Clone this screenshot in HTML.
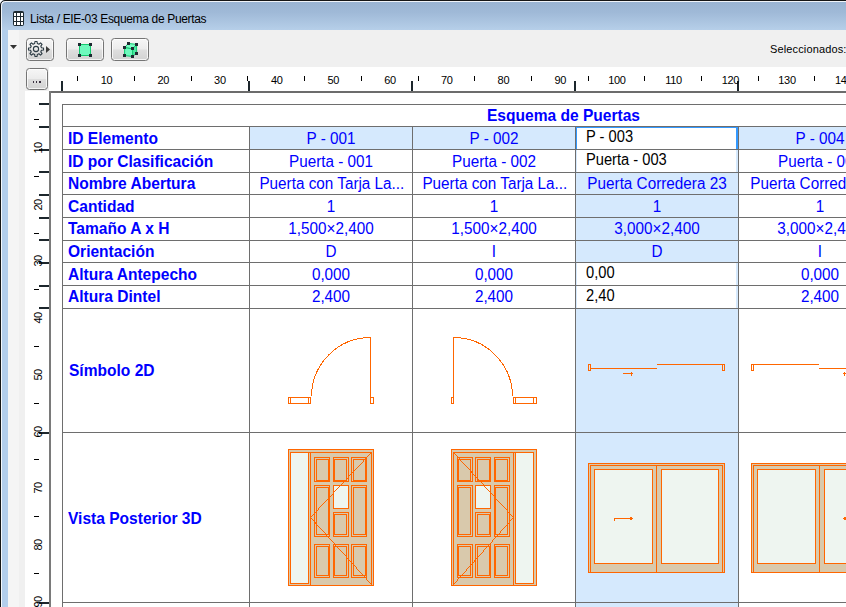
<!DOCTYPE html><html><head><meta charset="utf-8"><title>Lista</title><style>

html,body{margin:0;padding:0;}
body{width:846px;height:607px;overflow:hidden;position:relative;background:#fff;font-family:"Liberation Sans",sans-serif;}
div{position:absolute;box-sizing:border-box;}
.t{color:#0000ff;font-size:17.3px;line-height:23px;height:23px;white-space:nowrap;overflow:visible;transform:scaleX(.9);transform-origin:0 50%;}
.b{font-weight:bold;}
.c{text-align:center;transform-origin:50% 50%;transform:scaleX(.884);}
.e{color:#000;font-size:16px;line-height:22px;height:22px;white-space:nowrap;overflow:visible;transform:scaleX(.917);transform-origin:0 50%;}
.rl{letter-spacing:-0.35px;font-size:11px;line-height:12px;color:#000;white-space:nowrap;text-align:center;width:40px;height:12px;}
.vl{letter-spacing:-0.6px;font-size:11px;line-height:12px;color:#000;white-space:nowrap;text-align:center;width:40px;height:12px;transform:rotate(-90deg);transform-origin:50% 50%;}
.btn{border:1px solid #757575;border-radius:3.5px;background:linear-gradient(#f6f6f6 0%,#ececec 48%,#dedede 52%,#d2d2d2 100%);box-shadow:inset 0 0 0 1px rgba(255,255,255,.75);}
svg{position:absolute;left:0;top:0;}

</style></head><body>
<div style="left:0;top:0;width:860px;height:30px;border-radius:5px 0 0 0;background:linear-gradient(#99b3d2 0%,#9fb9d7 40%,#b6cfe9 100%);"></div>
<div style="left:0;top:30px;width:8px;height:577px;background:#b3ceeb;"></div>
<div style="left:8px;top:30px;width:838px;height:577px;background:#f0f0f0;"></div>
<div style="left:8px;top:30px;width:11px;height:577px;background:#f5f5f5;"></div>
<div style="left:49px;top:67px;width:797px;height:540px;background:#fff;"></div>
<div style="left:25px;top:91px;width:30px;height:516px;background:#fff;"></div>
<div style="left:0;top:0;width:860px;height:620px;border:1px solid #161616;border-radius:5px 0 0 0;box-shadow:inset 1px 1px 0 0 rgba(255,255,255,.85);"></div>
<div id="ttl" style="left:30px;top:11px;font-size:12px;line-height:16px;color:#000;white-space:nowrap;letter-spacing:-0.34px;">Lista / EIE-03 Esquema de Puertas</div>
<div id="sel" style="left:770px;top:42px;font-size:11px;line-height:14px;color:#000;white-space:nowrap;letter-spacing:0.14px;">Seleccionados:</div>
<div class="btn" style="left:26px;top:38px;width:28px;height:23px;"></div>
<div class="btn" style="left:66px;top:38px;width:38px;height:23px;"></div>
<div class="btn" style="left:111px;top:38px;width:38px;height:23px;"></div>
<div class="btn" style="left:26px;top:68px;width:22px;height:22px;"></div>
<div style="left:250px;top:127px;width:162px;height:22px;background:#D5E9FD;"></div>
<div style="left:413px;top:127px;width:162px;height:22px;background:#D5E9FD;"></div>
<div style="left:739px;top:127px;width:107px;height:22px;background:#D5E9FD;"></div>
<div style="left:576px;top:127px;width:162px;height:480px;background:#D5E9FD;"></div>
<div style="left:577px;top:128px;width:159px;height:21px;background:#fff;"></div>
<div style="left:577px;top:150px;width:159px;height:22px;background:#fff;"></div>
<div style="left:577px;top:263px;width:159px;height:22px;background:#fff;"></div>
<div style="left:577px;top:286px;width:159px;height:22px;background:#fff;"></div>
<div style="left:576px;top:127px;width:162px;height:22px;border-left:1px solid #3399ff;border-top:1px solid #3399ff;border-right:2px solid #3399ff;"></div>
<svg width="846" height="607" viewBox="0 0 846 607" shape-rendering="crispEdges"><rect x="49" y="91" width="797" height="2" fill="#6c6c6c" /><rect x="49" y="91" width="2" height="516" fill="#7a7a7a" /><rect x="62" y="104" width="784" height="1" fill="#6E6E6E" /><rect x="62" y="126" width="784" height="1" fill="#6E6E6E" /><rect x="62" y="149" width="784" height="1" fill="#6E6E6E" /><rect x="62" y="172" width="784" height="1" fill="#6E6E6E" /><rect x="62" y="194" width="784" height="1" fill="#6E6E6E" /><rect x="62" y="217" width="784" height="1" fill="#6E6E6E" /><rect x="62" y="240" width="784" height="1" fill="#6E6E6E" /><rect x="62" y="262" width="784" height="1" fill="#6E6E6E" /><rect x="62" y="285" width="784" height="1" fill="#6E6E6E" /><rect x="62" y="308" width="784" height="1" fill="#6E6E6E" /><rect x="62" y="432" width="784" height="1" fill="#6E6E6E" /><rect x="62" y="602" width="784" height="1" fill="#6E6E6E" /><rect x="62" y="104" width="1" height="503" fill="#6E6E6E" /><rect x="249" y="126" width="1" height="481" fill="#6E6E6E" /><rect x="412" y="126" width="1" height="481" fill="#6E6E6E" /><rect x="575" y="126" width="1" height="481" fill="#6E6E6E" /><rect x="738" y="126" width="1" height="481" fill="#6E6E6E" /><rect x="61" y="81" width="2" height="10" fill="#1c262c" /><rect x="248" y="81" width="2" height="10" fill="#1c262c" /><rect x="411" y="81" width="2" height="10" fill="#1c262c" /><rect x="574" y="81" width="2" height="10" fill="#1c262c" /><rect x="737" y="81" width="2" height="10" fill="#1c262c" /><rect x="77" y="76" width="1" height="5" fill="#000" /><rect x="134" y="76" width="1" height="5" fill="#000" /><rect x="191" y="76" width="1" height="5" fill="#000" /><rect x="247" y="76" width="1" height="5" fill="#000" /><rect x="304" y="76" width="1" height="5" fill="#000" /><rect x="361" y="76" width="1" height="5" fill="#000" /><rect x="418" y="76" width="1" height="5" fill="#000" /><rect x="474" y="76" width="1" height="5" fill="#000" /><rect x="531" y="76" width="1" height="5" fill="#000" /><rect x="588" y="76" width="1" height="5" fill="#000" /><rect x="644" y="76" width="1" height="5" fill="#000" /><rect x="701" y="76" width="1" height="5" fill="#000" /><rect x="758" y="76" width="1" height="5" fill="#000" /><rect x="814" y="76" width="1" height="5" fill="#000" /><rect x="39" y="103" width="10" height="2" fill="#1c262c" /><rect x="39" y="126" width="10" height="2" fill="#1c262c" /><rect x="39" y="149" width="10" height="2" fill="#1c262c" /><rect x="39" y="171" width="10" height="2" fill="#1c262c" /><rect x="39" y="194" width="10" height="2" fill="#1c262c" /><rect x="39" y="217" width="10" height="2" fill="#1c262c" /><rect x="39" y="239" width="10" height="2" fill="#1c262c" /><rect x="39" y="262" width="10" height="2" fill="#1c262c" /><rect x="39" y="285" width="10" height="2" fill="#1c262c" /><rect x="39" y="307" width="10" height="2" fill="#1c262c" /><rect x="39" y="432" width="10" height="2" fill="#1c262c" /><rect x="39" y="602" width="10" height="2" fill="#1c262c" /><rect x="34" y="119" width="5" height="1" fill="#000" /><rect x="34" y="176" width="5" height="1" fill="#000" /><rect x="34" y="233" width="5" height="1" fill="#000" /><rect x="34" y="289" width="5" height="1" fill="#000" /><rect x="34" y="346" width="5" height="1" fill="#000" /><rect x="34" y="403" width="5" height="1" fill="#000" /><rect x="34" y="459" width="5" height="1" fill="#000" /><rect x="34" y="516" width="5" height="1" fill="#000" /><rect x="34" y="573" width="5" height="1" fill="#000" /><rect x="288" y="397" width="23" height="1" fill="#FF6600" /><rect x="288" y="403" width="23" height="1" fill="#FF6600" /><rect x="288" y="397" width="1" height="7" fill="#FF6600" /><rect x="310" y="397" width="1" height="7" fill="#FF6600" /><rect x="290" y="397" width="1" height="7" fill="#FF6600" /><rect x="308" y="397" width="1" height="7" fill="#FF6600" /><rect x="370" y="397" width="4" height="1" fill="#FF6600" /><rect x="370" y="403" width="4" height="1" fill="#FF6600" /><rect x="370" y="397" width="1" height="7" fill="#FF6600" /><rect x="373" y="397" width="1" height="7" fill="#FF6600" /><rect x="370" y="337" width="1" height="61" fill="#FF6600" /><rect x="366" y="337" width="5" height="1" fill="#FF6600" /><path d="M311.5 396.5 A59 59.5 0 0 1 370.5 337.5" fill="none" stroke="#FF6600" stroke-width="1"/><rect x="451" y="397" width="3" height="1" fill="#FF6600" /><rect x="451" y="403" width="3" height="1" fill="#FF6600" /><rect x="451" y="397" width="1" height="7" fill="#FF6600" /><rect x="453" y="397" width="1" height="7" fill="#FF6600" /><rect x="453" y="337" width="1" height="61" fill="#FF6600" /><rect x="453" y="337" width="5" height="1" fill="#FF6600" /><rect x="513" y="397" width="24" height="1" fill="#FF6600" /><rect x="513" y="403" width="24" height="1" fill="#FF6600" /><rect x="513" y="397" width="1" height="7" fill="#FF6600" /><rect x="536" y="397" width="1" height="7" fill="#FF6600" /><rect x="515" y="397" width="1" height="7" fill="#FF6600" /><rect x="533" y="397" width="1" height="7" fill="#FF6600" /><path d="M453.5 337.5 A59 59.5 0 0 1 512.5 396.5" fill="none" stroke="#FF6600" stroke-width="1"/><rect x="588" y="364" width="3" height="1" fill="#FF6600" /><rect x="588" y="370" width="3" height="1" fill="#FF6600" /><rect x="588" y="364" width="1" height="7" fill="#FF6600" /><rect x="590" y="364" width="1" height="7" fill="#FF6600" /><rect x="591" y="368" width="66" height="1" fill="#FF6600" /><rect x="657" y="364" width="65" height="1" fill="#FF6600" /><rect x="722" y="364" width="3" height="1" fill="#FF6600" /><rect x="722" y="370" width="3" height="1" fill="#FF6600" /><rect x="722" y="364" width="1" height="7" fill="#FF6600" /><rect x="724" y="364" width="1" height="7" fill="#FF6600" /><rect x="623" y="373" width="10" height="1" fill="#FF6600" /><rect x="631" y="372" width="1" height="4" fill="#FF6600" /><rect x="751" y="364" width="3" height="1" fill="#FF6600" /><rect x="751" y="370" width="3" height="1" fill="#FF6600" /><rect x="751" y="364" width="1" height="7" fill="#FF6600" /><rect x="753" y="364" width="1" height="7" fill="#FF6600" /><rect x="754" y="364" width="65" height="1" fill="#FF6600" /><rect x="819" y="368" width="67" height="1" fill="#FF6600" /><rect x="843" y="373" width="10" height="1" fill="#FF6600" /><rect x="844" y="372" width="1" height="4" fill="#FF6600" /><rect x="288" y="449" width="86" height="137" fill="#D9C9AC" /><rect x="288" y="449" width="86" height="1" fill="#FF6600" /><rect x="288" y="585" width="86" height="1" fill="#FF6600" /><rect x="288" y="449" width="1" height="137" fill="#FF6600" /><rect x="373" y="449" width="1" height="137" fill="#FF6600" /><rect x="290" y="452" width="19" height="132" fill="#EEF5F0" /><rect x="290" y="452" width="19" height="1" fill="#FF6600" /><rect x="290" y="583" width="19" height="1" fill="#FF6600" /><rect x="290" y="452" width="1" height="132" fill="#FF6600" /><rect x="308" y="452" width="1" height="132" fill="#FF6600" /><rect x="308" y="452" width="64" height="1" fill="#FF6600" /><rect x="310" y="452" width="1" height="134" fill="#FF6600" /><rect x="371" y="452" width="1" height="134" fill="#FF6600" /><rect x="314" y="457" width="16" height="1" fill="#FF6600" /><rect x="314" y="481" width="16" height="1" fill="#FF6600" /><rect x="314" y="457" width="1" height="25" fill="#FF6600" /><rect x="329" y="457" width="1" height="25" fill="#FF6600" /><rect x="316" y="459" width="13" height="1" fill="#FF6600" /><rect x="316" y="480" width="13" height="1" fill="#FF6600" /><rect x="316" y="459" width="1" height="22" fill="#FF6600" /><rect x="328" y="459" width="1" height="22" fill="#FF6600" /><rect x="314" y="544" width="16" height="1" fill="#FF6600" /><rect x="314" y="577" width="16" height="1" fill="#FF6600" /><rect x="314" y="544" width="1" height="34" fill="#FF6600" /><rect x="329" y="544" width="1" height="34" fill="#FF6600" /><rect x="316" y="546" width="13" height="1" fill="#FF6600" /><rect x="316" y="575" width="13" height="1" fill="#FF6600" /><rect x="316" y="546" width="1" height="30" fill="#FF6600" /><rect x="328" y="546" width="1" height="30" fill="#FF6600" /><rect x="333" y="457" width="16" height="1" fill="#FF6600" /><rect x="333" y="481" width="16" height="1" fill="#FF6600" /><rect x="333" y="457" width="1" height="25" fill="#FF6600" /><rect x="348" y="457" width="1" height="25" fill="#FF6600" /><rect x="334" y="459" width="13" height="1" fill="#FF6600" /><rect x="334" y="480" width="13" height="1" fill="#FF6600" /><rect x="334" y="459" width="1" height="22" fill="#FF6600" /><rect x="346" y="459" width="1" height="22" fill="#FF6600" /><rect x="333" y="544" width="16" height="1" fill="#FF6600" /><rect x="333" y="577" width="16" height="1" fill="#FF6600" /><rect x="333" y="544" width="1" height="34" fill="#FF6600" /><rect x="348" y="544" width="1" height="34" fill="#FF6600" /><rect x="334" y="546" width="13" height="1" fill="#FF6600" /><rect x="334" y="575" width="13" height="1" fill="#FF6600" /><rect x="334" y="546" width="1" height="30" fill="#FF6600" /><rect x="346" y="546" width="1" height="30" fill="#FF6600" /><rect x="351" y="457" width="16" height="1" fill="#FF6600" /><rect x="351" y="481" width="16" height="1" fill="#FF6600" /><rect x="351" y="457" width="1" height="25" fill="#FF6600" /><rect x="366" y="457" width="1" height="25" fill="#FF6600" /><rect x="353" y="459" width="13" height="1" fill="#FF6600" /><rect x="353" y="480" width="13" height="1" fill="#FF6600" /><rect x="353" y="459" width="1" height="22" fill="#FF6600" /><rect x="365" y="459" width="1" height="22" fill="#FF6600" /><rect x="351" y="544" width="16" height="1" fill="#FF6600" /><rect x="351" y="577" width="16" height="1" fill="#FF6600" /><rect x="351" y="544" width="1" height="34" fill="#FF6600" /><rect x="366" y="544" width="1" height="34" fill="#FF6600" /><rect x="353" y="546" width="13" height="1" fill="#FF6600" /><rect x="353" y="575" width="13" height="1" fill="#FF6600" /><rect x="353" y="546" width="1" height="30" fill="#FF6600" /><rect x="365" y="546" width="1" height="30" fill="#FF6600" /><rect x="314" y="485" width="16" height="1" fill="#FF6600" /><rect x="314" y="536" width="16" height="1" fill="#FF6600" /><rect x="314" y="485" width="1" height="52" fill="#FF6600" /><rect x="329" y="485" width="1" height="52" fill="#FF6600" /><rect x="316" y="487" width="13" height="1" fill="#FF6600" /><rect x="316" y="534" width="13" height="1" fill="#FF6600" /><rect x="316" y="487" width="1" height="48" fill="#FF6600" /><rect x="328" y="487" width="1" height="48" fill="#FF6600" /><rect x="351" y="485" width="16" height="1" fill="#FF6600" /><rect x="351" y="536" width="16" height="1" fill="#FF6600" /><rect x="351" y="485" width="1" height="52" fill="#FF6600" /><rect x="366" y="485" width="1" height="52" fill="#FF6600" /><rect x="353" y="487" width="13" height="1" fill="#FF6600" /><rect x="353" y="534" width="13" height="1" fill="#FF6600" /><rect x="353" y="487" width="1" height="48" fill="#FF6600" /><rect x="365" y="487" width="1" height="48" fill="#FF6600" /><rect x="333" y="485" width="16" height="24" fill="#EEF5F0" /><rect x="333" y="485" width="16" height="1" fill="#FF6600" /><rect x="333" y="508" width="16" height="1" fill="#FF6600" /><rect x="333" y="485" width="1" height="24" fill="#FF6600" /><rect x="348" y="485" width="1" height="24" fill="#FF6600" /><rect x="333" y="512" width="16" height="1" fill="#FF6600" /><rect x="333" y="536" width="16" height="1" fill="#FF6600" /><rect x="333" y="512" width="1" height="25" fill="#FF6600" /><rect x="348" y="512" width="1" height="25" fill="#FF6600" /><rect x="334" y="514" width="13" height="1" fill="#FF6600" /><rect x="334" y="534" width="13" height="1" fill="#FF6600" /><rect x="334" y="514" width="1" height="21" fill="#FF6600" /><rect x="346" y="514" width="1" height="21" fill="#FF6600" /><rect x="371" y="452" width="1" height="1" fill="#FF6600" /><rect x="370" y="453" width="1" height="1" fill="#FF6600" /><rect x="369" y="454" width="1" height="1" fill="#FF6600" /><rect x="368" y="455" width="1" height="1" fill="#FF6600" /><rect x="367" y="456" width="1" height="1" fill="#FF6600" /><rect x="366" y="457" width="1" height="1" fill="#FF6600" /><rect x="365" y="458" width="1" height="1" fill="#FF6600" /><rect x="364" y="459" width="1" height="1" fill="#FF6600" /><rect x="363" y="460" width="1" height="1" fill="#FF6600" /><rect x="363" y="461" width="1" height="1" fill="#FF6600" /><rect x="362" y="462" width="1" height="1" fill="#FF6600" /><rect x="361" y="463" width="1" height="1" fill="#FF6600" /><rect x="360" y="464" width="1" height="1" fill="#FF6600" /><rect x="359" y="465" width="1" height="1" fill="#FF6600" /><rect x="358" y="466" width="1" height="1" fill="#FF6600" /><rect x="357" y="467" width="1" height="1" fill="#FF6600" /><rect x="356" y="468" width="1" height="1" fill="#FF6600" /><rect x="355" y="469" width="1" height="1" fill="#FF6600" /><rect x="354" y="470" width="1" height="1" fill="#FF6600" /><rect x="353" y="471" width="1" height="1" fill="#FF6600" /><rect x="352" y="472" width="1" height="1" fill="#FF6600" /><rect x="351" y="473" width="1" height="1" fill="#FF6600" /><rect x="350" y="474" width="1" height="1" fill="#FF6600" /><rect x="349" y="475" width="1" height="1" fill="#FF6600" /><rect x="348" y="476" width="1" height="1" fill="#FF6600" /><rect x="348" y="477" width="1" height="1" fill="#FF6600" /><rect x="347" y="478" width="1" height="1" fill="#FF6600" /><rect x="346" y="479" width="1" height="1" fill="#FF6600" /><rect x="345" y="480" width="1" height="1" fill="#FF6600" /><rect x="344" y="481" width="1" height="1" fill="#FF6600" /><rect x="343" y="482" width="1" height="1" fill="#FF6600" /><rect x="342" y="483" width="1" height="1" fill="#FF6600" /><rect x="341" y="484" width="1" height="1" fill="#FF6600" /><rect x="340" y="485" width="1" height="1" fill="#FF6600" /><rect x="339" y="486" width="1" height="1" fill="#FF6600" /><rect x="338" y="487" width="1" height="1" fill="#FF6600" /><rect x="337" y="488" width="1" height="1" fill="#FF6600" /><rect x="336" y="489" width="1" height="1" fill="#FF6600" /><rect x="335" y="490" width="1" height="1" fill="#FF6600" /><rect x="334" y="491" width="1" height="1" fill="#FF6600" /><rect x="333" y="492" width="1" height="1" fill="#FF6600" /><rect x="333" y="493" width="1" height="1" fill="#FF6600" /><rect x="332" y="494" width="1" height="1" fill="#FF6600" /><rect x="331" y="495" width="1" height="1" fill="#FF6600" /><rect x="330" y="496" width="1" height="1" fill="#FF6600" /><rect x="329" y="497" width="1" height="1" fill="#FF6600" /><rect x="328" y="498" width="1" height="1" fill="#FF6600" /><rect x="327" y="499" width="1" height="1" fill="#FF6600" /><rect x="326" y="500" width="1" height="1" fill="#FF6600" /><rect x="325" y="501" width="1" height="1" fill="#FF6600" /><rect x="324" y="502" width="1" height="1" fill="#FF6600" /><rect x="323" y="503" width="1" height="1" fill="#FF6600" /><rect x="322" y="504" width="1" height="1" fill="#FF6600" /><rect x="321" y="505" width="1" height="1" fill="#FF6600" /><rect x="320" y="506" width="1" height="1" fill="#FF6600" /><rect x="319" y="507" width="1" height="1" fill="#FF6600" /><rect x="318" y="508" width="1" height="1" fill="#FF6600" /><rect x="318" y="509" width="1" height="1" fill="#FF6600" /><rect x="317" y="510" width="1" height="1" fill="#FF6600" /><rect x="316" y="511" width="1" height="1" fill="#FF6600" /><rect x="315" y="512" width="1" height="1" fill="#FF6600" /><rect x="314" y="513" width="1" height="1" fill="#FF6600" /><rect x="313" y="514" width="1" height="1" fill="#FF6600" /><rect x="312" y="515" width="1" height="1" fill="#FF6600" /><rect x="311" y="516" width="1" height="1" fill="#FF6600" /><rect x="310" y="517" width="1" height="1" fill="#FF6600" /><rect x="310" y="517" width="1" height="1" fill="#FF6600" /><rect x="311" y="518" width="1" height="1" fill="#FF6600" /><rect x="312" y="519" width="1" height="1" fill="#FF6600" /><rect x="313" y="520" width="1" height="1" fill="#FF6600" /><rect x="314" y="521" width="1" height="1" fill="#FF6600" /><rect x="315" y="522" width="1" height="1" fill="#FF6600" /><rect x="315" y="523" width="1" height="1" fill="#FF6600" /><rect x="316" y="524" width="1" height="1" fill="#FF6600" /><rect x="317" y="525" width="1" height="1" fill="#FF6600" /><rect x="318" y="526" width="1" height="1" fill="#FF6600" /><rect x="319" y="527" width="1" height="1" fill="#FF6600" /><rect x="320" y="528" width="1" height="1" fill="#FF6600" /><rect x="321" y="529" width="1" height="1" fill="#FF6600" /><rect x="322" y="530" width="1" height="1" fill="#FF6600" /><rect x="323" y="531" width="1" height="1" fill="#FF6600" /><rect x="324" y="532" width="1" height="1" fill="#FF6600" /><rect x="325" y="533" width="1" height="1" fill="#FF6600" /><rect x="325" y="534" width="1" height="1" fill="#FF6600" /><rect x="326" y="535" width="1" height="1" fill="#FF6600" /><rect x="327" y="536" width="1" height="1" fill="#FF6600" /><rect x="328" y="537" width="1" height="1" fill="#FF6600" /><rect x="329" y="538" width="1" height="1" fill="#FF6600" /><rect x="330" y="539" width="1" height="1" fill="#FF6600" /><rect x="331" y="540" width="1" height="1" fill="#FF6600" /><rect x="332" y="541" width="1" height="1" fill="#FF6600" /><rect x="333" y="542" width="1" height="1" fill="#FF6600" /><rect x="334" y="543" width="1" height="1" fill="#FF6600" /><rect x="335" y="544" width="1" height="1" fill="#FF6600" /><rect x="335" y="545" width="1" height="1" fill="#FF6600" /><rect x="336" y="546" width="1" height="1" fill="#FF6600" /><rect x="337" y="547" width="1" height="1" fill="#FF6600" /><rect x="338" y="548" width="1" height="1" fill="#FF6600" /><rect x="339" y="549" width="1" height="1" fill="#FF6600" /><rect x="340" y="550" width="1" height="1" fill="#FF6600" /><rect x="341" y="551" width="1" height="1" fill="#FF6600" /><rect x="342" y="552" width="1" height="1" fill="#FF6600" /><rect x="343" y="553" width="1" height="1" fill="#FF6600" /><rect x="344" y="554" width="1" height="1" fill="#FF6600" /><rect x="345" y="555" width="1" height="1" fill="#FF6600" /><rect x="346" y="556" width="1" height="1" fill="#FF6600" /><rect x="346" y="557" width="1" height="1" fill="#FF6600" /><rect x="347" y="558" width="1" height="1" fill="#FF6600" /><rect x="348" y="559" width="1" height="1" fill="#FF6600" /><rect x="349" y="560" width="1" height="1" fill="#FF6600" /><rect x="350" y="561" width="1" height="1" fill="#FF6600" /><rect x="351" y="562" width="1" height="1" fill="#FF6600" /><rect x="352" y="563" width="1" height="1" fill="#FF6600" /><rect x="353" y="564" width="1" height="1" fill="#FF6600" /><rect x="354" y="565" width="1" height="1" fill="#FF6600" /><rect x="355" y="566" width="1" height="1" fill="#FF6600" /><rect x="356" y="567" width="1" height="1" fill="#FF6600" /><rect x="356" y="568" width="1" height="1" fill="#FF6600" /><rect x="357" y="569" width="1" height="1" fill="#FF6600" /><rect x="358" y="570" width="1" height="1" fill="#FF6600" /><rect x="359" y="571" width="1" height="1" fill="#FF6600" /><rect x="360" y="572" width="1" height="1" fill="#FF6600" /><rect x="361" y="573" width="1" height="1" fill="#FF6600" /><rect x="362" y="574" width="1" height="1" fill="#FF6600" /><rect x="363" y="575" width="1" height="1" fill="#FF6600" /><rect x="364" y="576" width="1" height="1" fill="#FF6600" /><rect x="365" y="577" width="1" height="1" fill="#FF6600" /><rect x="366" y="578" width="1" height="1" fill="#FF6600" /><rect x="366" y="579" width="1" height="1" fill="#FF6600" /><rect x="367" y="580" width="1" height="1" fill="#FF6600" /><rect x="368" y="581" width="1" height="1" fill="#FF6600" /><rect x="369" y="582" width="1" height="1" fill="#FF6600" /><rect x="370" y="583" width="1" height="1" fill="#FF6600" /><rect x="371" y="584" width="1" height="1" fill="#FF6600" /><rect x="451" y="449" width="86" height="137" fill="#D9C9AC" /><rect x="451" y="449" width="86" height="1" fill="#FF6600" /><rect x="451" y="585" width="86" height="1" fill="#FF6600" /><rect x="451" y="449" width="1" height="137" fill="#FF6600" /><rect x="536" y="449" width="1" height="137" fill="#FF6600" /><rect x="515" y="452" width="19" height="132" fill="#EEF5F0" /><rect x="515" y="452" width="19" height="1" fill="#FF6600" /><rect x="515" y="583" width="19" height="1" fill="#FF6600" /><rect x="515" y="452" width="1" height="132" fill="#FF6600" /><rect x="533" y="452" width="1" height="132" fill="#FF6600" /><rect x="453" y="452" width="63" height="1" fill="#FF6600" /><rect x="453" y="452" width="1" height="134" fill="#FF6600" /><rect x="513" y="452" width="1" height="134" fill="#FF6600" /><rect x="457" y="457" width="16" height="1" fill="#FF6600" /><rect x="457" y="481" width="16" height="1" fill="#FF6600" /><rect x="457" y="457" width="1" height="25" fill="#FF6600" /><rect x="472" y="457" width="1" height="25" fill="#FF6600" /><rect x="458" y="459" width="13" height="1" fill="#FF6600" /><rect x="458" y="480" width="13" height="1" fill="#FF6600" /><rect x="458" y="459" width="1" height="22" fill="#FF6600" /><rect x="470" y="459" width="1" height="22" fill="#FF6600" /><rect x="457" y="544" width="16" height="1" fill="#FF6600" /><rect x="457" y="577" width="16" height="1" fill="#FF6600" /><rect x="457" y="544" width="1" height="34" fill="#FF6600" /><rect x="472" y="544" width="1" height="34" fill="#FF6600" /><rect x="458" y="546" width="13" height="1" fill="#FF6600" /><rect x="458" y="575" width="13" height="1" fill="#FF6600" /><rect x="458" y="546" width="1" height="30" fill="#FF6600" /><rect x="470" y="546" width="1" height="30" fill="#FF6600" /><rect x="475" y="457" width="16" height="1" fill="#FF6600" /><rect x="475" y="481" width="16" height="1" fill="#FF6600" /><rect x="475" y="457" width="1" height="25" fill="#FF6600" /><rect x="490" y="457" width="1" height="25" fill="#FF6600" /><rect x="477" y="459" width="13" height="1" fill="#FF6600" /><rect x="477" y="480" width="13" height="1" fill="#FF6600" /><rect x="477" y="459" width="1" height="22" fill="#FF6600" /><rect x="489" y="459" width="1" height="22" fill="#FF6600" /><rect x="475" y="544" width="16" height="1" fill="#FF6600" /><rect x="475" y="577" width="16" height="1" fill="#FF6600" /><rect x="475" y="544" width="1" height="34" fill="#FF6600" /><rect x="490" y="544" width="1" height="34" fill="#FF6600" /><rect x="477" y="546" width="13" height="1" fill="#FF6600" /><rect x="477" y="575" width="13" height="1" fill="#FF6600" /><rect x="477" y="546" width="1" height="30" fill="#FF6600" /><rect x="489" y="546" width="1" height="30" fill="#FF6600" /><rect x="494" y="457" width="16" height="1" fill="#FF6600" /><rect x="494" y="481" width="16" height="1" fill="#FF6600" /><rect x="494" y="457" width="1" height="25" fill="#FF6600" /><rect x="509" y="457" width="1" height="25" fill="#FF6600" /><rect x="495" y="459" width="13" height="1" fill="#FF6600" /><rect x="495" y="480" width="13" height="1" fill="#FF6600" /><rect x="495" y="459" width="1" height="22" fill="#FF6600" /><rect x="507" y="459" width="1" height="22" fill="#FF6600" /><rect x="494" y="544" width="16" height="1" fill="#FF6600" /><rect x="494" y="577" width="16" height="1" fill="#FF6600" /><rect x="494" y="544" width="1" height="34" fill="#FF6600" /><rect x="509" y="544" width="1" height="34" fill="#FF6600" /><rect x="495" y="546" width="13" height="1" fill="#FF6600" /><rect x="495" y="575" width="13" height="1" fill="#FF6600" /><rect x="495" y="546" width="1" height="30" fill="#FF6600" /><rect x="507" y="546" width="1" height="30" fill="#FF6600" /><rect x="457" y="485" width="16" height="1" fill="#FF6600" /><rect x="457" y="536" width="16" height="1" fill="#FF6600" /><rect x="457" y="485" width="1" height="52" fill="#FF6600" /><rect x="472" y="485" width="1" height="52" fill="#FF6600" /><rect x="458" y="487" width="13" height="1" fill="#FF6600" /><rect x="458" y="534" width="13" height="1" fill="#FF6600" /><rect x="458" y="487" width="1" height="48" fill="#FF6600" /><rect x="470" y="487" width="1" height="48" fill="#FF6600" /><rect x="494" y="485" width="16" height="1" fill="#FF6600" /><rect x="494" y="536" width="16" height="1" fill="#FF6600" /><rect x="494" y="485" width="1" height="52" fill="#FF6600" /><rect x="509" y="485" width="1" height="52" fill="#FF6600" /><rect x="495" y="487" width="13" height="1" fill="#FF6600" /><rect x="495" y="534" width="13" height="1" fill="#FF6600" /><rect x="495" y="487" width="1" height="48" fill="#FF6600" /><rect x="507" y="487" width="1" height="48" fill="#FF6600" /><rect x="475" y="485" width="16" height="24" fill="#EEF5F0" /><rect x="475" y="485" width="16" height="1" fill="#FF6600" /><rect x="475" y="508" width="16" height="1" fill="#FF6600" /><rect x="475" y="485" width="1" height="24" fill="#FF6600" /><rect x="490" y="485" width="1" height="24" fill="#FF6600" /><rect x="475" y="512" width="16" height="1" fill="#FF6600" /><rect x="475" y="536" width="16" height="1" fill="#FF6600" /><rect x="475" y="512" width="1" height="25" fill="#FF6600" /><rect x="490" y="512" width="1" height="25" fill="#FF6600" /><rect x="477" y="514" width="13" height="1" fill="#FF6600" /><rect x="477" y="534" width="13" height="1" fill="#FF6600" /><rect x="477" y="514" width="1" height="21" fill="#FF6600" /><rect x="489" y="514" width="1" height="21" fill="#FF6600" /><rect x="453" y="452" width="1" height="1" fill="#FF6600" /><rect x="454" y="453" width="1" height="1" fill="#FF6600" /><rect x="455" y="454" width="1" height="1" fill="#FF6600" /><rect x="456" y="455" width="1" height="1" fill="#FF6600" /><rect x="457" y="456" width="1" height="1" fill="#FF6600" /><rect x="458" y="457" width="1" height="1" fill="#FF6600" /><rect x="459" y="458" width="1" height="1" fill="#FF6600" /><rect x="459" y="459" width="1" height="1" fill="#FF6600" /><rect x="460" y="460" width="1" height="1" fill="#FF6600" /><rect x="461" y="461" width="1" height="1" fill="#FF6600" /><rect x="462" y="462" width="1" height="1" fill="#FF6600" /><rect x="463" y="463" width="1" height="1" fill="#FF6600" /><rect x="464" y="464" width="1" height="1" fill="#FF6600" /><rect x="465" y="465" width="1" height="1" fill="#FF6600" /><rect x="466" y="466" width="1" height="1" fill="#FF6600" /><rect x="467" y="467" width="1" height="1" fill="#FF6600" /><rect x="468" y="468" width="1" height="1" fill="#FF6600" /><rect x="469" y="469" width="1" height="1" fill="#FF6600" /><rect x="470" y="470" width="1" height="1" fill="#FF6600" /><rect x="471" y="471" width="1" height="1" fill="#FF6600" /><rect x="471" y="472" width="1" height="1" fill="#FF6600" /><rect x="472" y="473" width="1" height="1" fill="#FF6600" /><rect x="473" y="474" width="1" height="1" fill="#FF6600" /><rect x="474" y="475" width="1" height="1" fill="#FF6600" /><rect x="475" y="476" width="1" height="1" fill="#FF6600" /><rect x="476" y="477" width="1" height="1" fill="#FF6600" /><rect x="477" y="478" width="1" height="1" fill="#FF6600" /><rect x="478" y="479" width="1" height="1" fill="#FF6600" /><rect x="479" y="480" width="1" height="1" fill="#FF6600" /><rect x="480" y="481" width="1" height="1" fill="#FF6600" /><rect x="481" y="482" width="1" height="1" fill="#FF6600" /><rect x="482" y="483" width="1" height="1" fill="#FF6600" /><rect x="483" y="484" width="1" height="1" fill="#FF6600" /><rect x="483" y="485" width="1" height="1" fill="#FF6600" /><rect x="484" y="486" width="1" height="1" fill="#FF6600" /><rect x="485" y="487" width="1" height="1" fill="#FF6600" /><rect x="486" y="488" width="1" height="1" fill="#FF6600" /><rect x="487" y="489" width="1" height="1" fill="#FF6600" /><rect x="488" y="490" width="1" height="1" fill="#FF6600" /><rect x="489" y="491" width="1" height="1" fill="#FF6600" /><rect x="490" y="492" width="1" height="1" fill="#FF6600" /><rect x="491" y="493" width="1" height="1" fill="#FF6600" /><rect x="492" y="494" width="1" height="1" fill="#FF6600" /><rect x="493" y="495" width="1" height="1" fill="#FF6600" /><rect x="494" y="496" width="1" height="1" fill="#FF6600" /><rect x="495" y="497" width="1" height="1" fill="#FF6600" /><rect x="495" y="498" width="1" height="1" fill="#FF6600" /><rect x="496" y="499" width="1" height="1" fill="#FF6600" /><rect x="497" y="500" width="1" height="1" fill="#FF6600" /><rect x="498" y="501" width="1" height="1" fill="#FF6600" /><rect x="499" y="502" width="1" height="1" fill="#FF6600" /><rect x="500" y="503" width="1" height="1" fill="#FF6600" /><rect x="501" y="504" width="1" height="1" fill="#FF6600" /><rect x="502" y="505" width="1" height="1" fill="#FF6600" /><rect x="503" y="506" width="1" height="1" fill="#FF6600" /><rect x="504" y="507" width="1" height="1" fill="#FF6600" /><rect x="505" y="508" width="1" height="1" fill="#FF6600" /><rect x="506" y="509" width="1" height="1" fill="#FF6600" /><rect x="507" y="510" width="1" height="1" fill="#FF6600" /><rect x="507" y="511" width="1" height="1" fill="#FF6600" /><rect x="508" y="512" width="1" height="1" fill="#FF6600" /><rect x="509" y="513" width="1" height="1" fill="#FF6600" /><rect x="510" y="514" width="1" height="1" fill="#FF6600" /><rect x="511" y="515" width="1" height="1" fill="#FF6600" /><rect x="512" y="516" width="1" height="1" fill="#FF6600" /><rect x="513" y="517" width="1" height="1" fill="#FF6600" /><rect x="513" y="517" width="1" height="1" fill="#FF6600" /><rect x="512" y="518" width="1" height="1" fill="#FF6600" /><rect x="511" y="519" width="1" height="1" fill="#FF6600" /><rect x="510" y="520" width="1" height="1" fill="#FF6600" /><rect x="509" y="521" width="1" height="1" fill="#FF6600" /><rect x="509" y="522" width="1" height="1" fill="#FF6600" /><rect x="508" y="523" width="1" height="1" fill="#FF6600" /><rect x="507" y="524" width="1" height="1" fill="#FF6600" /><rect x="506" y="525" width="1" height="1" fill="#FF6600" /><rect x="505" y="526" width="1" height="1" fill="#FF6600" /><rect x="504" y="527" width="1" height="1" fill="#FF6600" /><rect x="503" y="528" width="1" height="1" fill="#FF6600" /><rect x="502" y="529" width="1" height="1" fill="#FF6600" /><rect x="501" y="530" width="1" height="1" fill="#FF6600" /><rect x="500" y="531" width="1" height="1" fill="#FF6600" /><rect x="500" y="532" width="1" height="1" fill="#FF6600" /><rect x="499" y="533" width="1" height="1" fill="#FF6600" /><rect x="498" y="534" width="1" height="1" fill="#FF6600" /><rect x="497" y="535" width="1" height="1" fill="#FF6600" /><rect x="496" y="536" width="1" height="1" fill="#FF6600" /><rect x="495" y="537" width="1" height="1" fill="#FF6600" /><rect x="494" y="538" width="1" height="1" fill="#FF6600" /><rect x="493" y="539" width="1" height="1" fill="#FF6600" /><rect x="492" y="540" width="1" height="1" fill="#FF6600" /><rect x="492" y="541" width="1" height="1" fill="#FF6600" /><rect x="491" y="542" width="1" height="1" fill="#FF6600" /><rect x="490" y="543" width="1" height="1" fill="#FF6600" /><rect x="489" y="544" width="1" height="1" fill="#FF6600" /><rect x="488" y="545" width="1" height="1" fill="#FF6600" /><rect x="487" y="546" width="1" height="1" fill="#FF6600" /><rect x="486" y="547" width="1" height="1" fill="#FF6600" /><rect x="485" y="548" width="1" height="1" fill="#FF6600" /><rect x="484" y="549" width="1" height="1" fill="#FF6600" /><rect x="483" y="550" width="1" height="1" fill="#FF6600" /><rect x="483" y="551" width="1" height="1" fill="#FF6600" /><rect x="482" y="552" width="1" height="1" fill="#FF6600" /><rect x="481" y="553" width="1" height="1" fill="#FF6600" /><rect x="480" y="554" width="1" height="1" fill="#FF6600" /><rect x="479" y="555" width="1" height="1" fill="#FF6600" /><rect x="478" y="556" width="1" height="1" fill="#FF6600" /><rect x="477" y="557" width="1" height="1" fill="#FF6600" /><rect x="476" y="558" width="1" height="1" fill="#FF6600" /><rect x="475" y="559" width="1" height="1" fill="#FF6600" /><rect x="474" y="560" width="1" height="1" fill="#FF6600" /><rect x="474" y="561" width="1" height="1" fill="#FF6600" /><rect x="473" y="562" width="1" height="1" fill="#FF6600" /><rect x="472" y="563" width="1" height="1" fill="#FF6600" /><rect x="471" y="564" width="1" height="1" fill="#FF6600" /><rect x="470" y="565" width="1" height="1" fill="#FF6600" /><rect x="469" y="566" width="1" height="1" fill="#FF6600" /><rect x="468" y="567" width="1" height="1" fill="#FF6600" /><rect x="467" y="568" width="1" height="1" fill="#FF6600" /><rect x="466" y="569" width="1" height="1" fill="#FF6600" /><rect x="466" y="570" width="1" height="1" fill="#FF6600" /><rect x="465" y="571" width="1" height="1" fill="#FF6600" /><rect x="464" y="572" width="1" height="1" fill="#FF6600" /><rect x="463" y="573" width="1" height="1" fill="#FF6600" /><rect x="462" y="574" width="1" height="1" fill="#FF6600" /><rect x="461" y="575" width="1" height="1" fill="#FF6600" /><rect x="460" y="576" width="1" height="1" fill="#FF6600" /><rect x="459" y="577" width="1" height="1" fill="#FF6600" /><rect x="458" y="578" width="1" height="1" fill="#FF6600" /><rect x="457" y="579" width="1" height="1" fill="#FF6600" /><rect x="457" y="580" width="1" height="1" fill="#FF6600" /><rect x="456" y="581" width="1" height="1" fill="#FF6600" /><rect x="455" y="582" width="1" height="1" fill="#FF6600" /><rect x="454" y="583" width="1" height="1" fill="#FF6600" /><rect x="453" y="584" width="1" height="1" fill="#FF6600" /><rect x="588" y="463" width="137" height="110" fill="#D9C9AC" /><rect x="588" y="463" width="137" height="1" fill="#FF6600" /><rect x="588" y="572" width="137" height="1" fill="#FF6600" /><rect x="588" y="463" width="1" height="110" fill="#FF6600" /><rect x="724" y="463" width="1" height="110" fill="#FF6600" /><rect x="590" y="465" width="1" height="108" fill="#FF6600" /><rect x="590" y="465" width="133" height="1" fill="#FF6600" /><rect x="722" y="465" width="1" height="108" fill="#FF6600" /><rect x="594" y="469" width="59" height="95" fill="#EEF5F0" /><rect x="594" y="469" width="59" height="1" fill="#FF6600" /><rect x="594" y="563" width="59" height="1" fill="#FF6600" /><rect x="594" y="469" width="1" height="95" fill="#FF6600" /><rect x="652" y="469" width="1" height="95" fill="#FF6600" /><rect x="656" y="465" width="1" height="108" fill="#FF6600" /><rect x="661" y="469" width="58" height="95" fill="#EEF5F0" /><rect x="661" y="469" width="58" height="1" fill="#FF6600" /><rect x="661" y="563" width="58" height="1" fill="#FF6600" /><rect x="661" y="469" width="1" height="95" fill="#FF6600" /><rect x="718" y="469" width="1" height="95" fill="#FF6600" /><rect x="614" y="518" width="19" height="1" fill="#FF6600" /><rect x="614" y="518" width="1" height="3" fill="#FF6600" /><rect x="630" y="517" width="2" height="3" fill="#FF6600" /><rect x="751" y="463" width="137" height="110" fill="#D9C9AC" /><rect x="751" y="463" width="137" height="1" fill="#FF6600" /><rect x="751" y="572" width="137" height="1" fill="#FF6600" /><rect x="751" y="463" width="1" height="110" fill="#FF6600" /><rect x="887" y="463" width="1" height="110" fill="#FF6600" /><rect x="753" y="465" width="1" height="108" fill="#FF6600" /><rect x="753" y="465" width="133" height="1" fill="#FF6600" /><rect x="885" y="465" width="1" height="108" fill="#FF6600" /><rect x="757" y="469" width="59" height="95" fill="#EEF5F0" /><rect x="757" y="469" width="59" height="1" fill="#FF6600" /><rect x="757" y="563" width="59" height="1" fill="#FF6600" /><rect x="757" y="469" width="1" height="95" fill="#FF6600" /><rect x="815" y="469" width="1" height="95" fill="#FF6600" /><rect x="819" y="465" width="1" height="108" fill="#FF6600" /><rect x="824" y="469" width="58" height="95" fill="#EEF5F0" /><rect x="824" y="469" width="58" height="1" fill="#FF6600" /><rect x="824" y="563" width="58" height="1" fill="#FF6600" /><rect x="824" y="469" width="1" height="95" fill="#FF6600" /><rect x="881" y="469" width="1" height="95" fill="#FF6600" /><rect x="843" y="518" width="19" height="1" fill="#FF6600" /><rect x="861" y="518" width="1" height="3" fill="#FF6600" /><rect x="844" y="517" width="2" height="3" fill="#FF6600" /></svg>
<svg width="846" height="607" viewBox="0 0 846 607"><rect x="13" y="11" width="11" height="15" rx="2" ry="2" fill="#1e2a31"/><rect x="14" y="13" width="2" height="3" fill="#fff" shape-rendering="crispEdges"/><rect x="14" y="17" width="2" height="4" fill="#fff" shape-rendering="crispEdges"/><rect x="14" y="22" width="2" height="3" fill="#fff" shape-rendering="crispEdges"/><rect x="17" y="13" width="3" height="3" fill="#fff" shape-rendering="crispEdges"/><rect x="17" y="17" width="3" height="4" fill="#fff" shape-rendering="crispEdges"/><rect x="17" y="22" width="3" height="3" fill="#fff" shape-rendering="crispEdges"/><rect x="21" y="13" width="2" height="3" fill="#fff" shape-rendering="crispEdges"/><rect x="21" y="17" width="2" height="4" fill="#fff" shape-rendering="crispEdges"/><rect x="21" y="22" width="2" height="3" fill="#fff" shape-rendering="crispEdges"/><path d="M10 45 L17 45 L13.5 49 Z" fill="#333"/><path d="M34.69 43.55 L34.93 41.48 L37.07 41.48 L37.31 43.55 L38.93 44.23 L40.56 42.92 L42.08 44.44 L40.77 46.07 L41.45 47.69 L43.52 47.93 L43.52 50.07 L41.45 50.31 L40.77 51.93 L42.08 53.56 L40.56 55.08 L38.93 53.77 L37.31 54.45 L37.07 56.52 L34.93 56.52 L34.69 54.45 L33.07 53.77 L31.44 55.08 L29.92 53.56 L31.23 51.93 L30.55 50.31 L28.48 50.07 L28.48 47.93 L30.55 47.69 L31.23 46.07 L29.92 44.44 L31.44 42.92 L33.07 44.23 Z" fill="none" stroke="#2b3a43" stroke-width="1.1" stroke-linejoin="round"/><circle cx="36.0" cy="49.0" r="2.6" fill="none" stroke="#2b3a43" stroke-width="1.1"/><path d="M46 46 L50 49.5 L46 53 Z" fill="#3a3a3a"/><rect x="79.5" y="44.5" width="11" height="11" fill="#6ef9bd" stroke="#12c96f" stroke-width="1"/><rect x="78" y="43" width="3" height="3" fill="#1e2a31" shape-rendering="crispEdges"/><rect x="78" y="54" width="3" height="3" fill="#1e2a31" shape-rendering="crispEdges"/><rect x="89" y="43" width="3" height="3" fill="#1e2a31" shape-rendering="crispEdges"/><rect x="89" y="54" width="3" height="3" fill="#1e2a31" shape-rendering="crispEdges"/><polygon points="128.4,43.4 136.6,44.4 132.7,48.9 124.6,47.6" fill="#7dfcc6" stroke="#12c96f" stroke-width="1" stroke-linejoin="round"/><polygon points="124.6,47.6 132.7,48.9 132.7,56.5 124.6,55.6" fill="#6ef9bd" stroke="#12c96f" stroke-width="1" stroke-linejoin="round"/><polygon points="132.7,48.9 136.6,44.4 136.6,53.0 132.7,56.5" fill="#4fe9a4" stroke="#12c96f" stroke-width="1" stroke-linejoin="round"/><rect x="127" y="42" width="3" height="3" fill="#1e2a31" shape-rendering="crispEdges"/><rect x="135" y="43" width="3" height="3" fill="#1e2a31" shape-rendering="crispEdges"/><rect x="123" y="46" width="3" height="3" fill="#1e2a31" shape-rendering="crispEdges"/><rect x="131" y="47" width="3" height="3" fill="#1e2a31" shape-rendering="crispEdges"/><rect x="135" y="52" width="3" height="3" fill="#1e2a31" shape-rendering="crispEdges"/><rect x="123" y="54" width="3" height="3" fill="#1e2a31" shape-rendering="crispEdges"/><rect x="131" y="55" width="3" height="3" fill="#1e2a31" shape-rendering="crispEdges"/></svg>
<div class="rl" style="left:86.5px;top:74px;">10</div>
<div class="rl" style="left:143.2px;top:74px;">20</div>
<div class="rl" style="left:199.9px;top:74px;">30</div>
<div class="rl" style="left:256.7px;top:74px;">40</div>
<div class="rl" style="left:313.3px;top:74px;">50</div>
<div class="rl" style="left:370.1px;top:74px;">60</div>
<div class="rl" style="left:426.8px;top:74px;">70</div>
<div class="rl" style="left:483.4px;top:74px;">80</div>
<div class="rl" style="left:540.2px;top:74px;">90</div>
<div class="rl" style="left:596.9px;top:74px;">100</div>
<div class="rl" style="left:653.6px;top:74px;">110</div>
<div class="rl" style="left:710.3px;top:74px;">120</div>
<div class="rl" style="left:767.0px;top:74px;">130</div>
<div class="rl" style="left:823.7px;top:74px;">140</div>
<div class="vl" style="left:18px;top:142.0px;">10</div>
<div class="vl" style="left:18px;top:198.7px;">20</div>
<div class="vl" style="left:18px;top:255.4px;">30</div>
<div class="vl" style="left:18px;top:312.1px;">40</div>
<div class="vl" style="left:18px;top:368.8px;">50</div>
<div class="vl" style="left:18px;top:425.5px;">60</div>
<div class="vl" style="left:18px;top:482.2px;">70</div>
<div class="vl" style="left:18px;top:538.9px;">80</div>
<div class="vl" style="left:18px;top:595.6px;">90</div>
<div style="left:32.5px;top:81px;width:1.6px;height:2px;background:#3a3040;"></div><div style="left:35.8px;top:81px;width:1.6px;height:2px;background:#3a3040;"></div><div style="left:39px;top:81px;width:1.6px;height:2px;background:#3a3040;"></div>
<div class="t b" id="tt" style="left:487px;top:104px;">Esquema de Puertas</div>
<div class="t b" style="left:67.5px;top:127px;">ID Elemento</div>
<div class="t b" style="left:67.5px;top:150px;">ID por Clasificación</div>
<div class="t b" style="left:67.5px;top:172px;">Nombre Abertura</div>
<div class="t b" style="left:67.5px;top:195px;">Cantidad</div>
<div class="t b" style="left:67.5px;top:217px;">Tamaño A x H</div>
<div class="t b" style="left:67.5px;top:240px;">Orientación</div>
<div class="t b" style="left:67.5px;top:263px;">Altura Antepecho</div>
<div class="t b" style="left:67.5px;top:285px;">Altura Dintel</div>
<div class="t b" style="left:69px;top:359px;">Símbolo 2D</div>
<div class="t b" style="left:67.5px;top:507px;">Vista Posterior 3D</div>
<div class="t c" style="left:250px;top:127px;width:162px;">P - 001</div>
<div class="t c" style="left:250px;top:150px;width:162px;">Puerta - 001</div>
<div class="t c" style="left:250px;top:172px;width:162px;">Puerta con Tarja La...</div>
<div class="t c" style="left:250px;top:195px;width:162px;">1</div>
<div class="t c" style="left:250px;top:217px;width:162px;">1,500×2,400</div>
<div class="t c" style="left:250px;top:240px;width:162px;">D</div>
<div class="t c" style="left:250px;top:263px;width:162px;">0,000</div>
<div class="t c" style="left:250px;top:285px;width:162px;">2,400</div>
<div class="t c" style="left:413px;top:127px;width:162px;">P - 002</div>
<div class="t c" style="left:413px;top:150px;width:162px;">Puerta - 002</div>
<div class="t c" style="left:413px;top:172px;width:162px;">Puerta con Tarja La...</div>
<div class="t c" style="left:413px;top:195px;width:162px;">1</div>
<div class="t c" style="left:413px;top:217px;width:162px;">1,500×2,400</div>
<div class="t c" style="left:413px;top:240px;width:162px;">I</div>
<div class="t c" style="left:413px;top:263px;width:162px;">0,000</div>
<div class="t c" style="left:413px;top:285px;width:162px;">2,400</div>
<div class="t c" style="left:576px;top:172px;width:162px;">Puerta Corredera 23</div>
<div class="t c" style="left:576px;top:195px;width:162px;">1</div>
<div class="t c" style="left:576px;top:217px;width:162px;">3,000×2,400</div>
<div class="t c" style="left:576px;top:240px;width:162px;">D</div>
<div class="t c" style="left:739px;top:127px;width:162px;">P - 004</div>
<div class="t c" style="left:739px;top:150px;width:162px;">Puerta - 004</div>
<div class="t c" style="left:739px;top:172px;width:162px;">Puerta Corredera 23</div>
<div class="t c" style="left:739px;top:195px;width:162px;">1</div>
<div class="t c" style="left:739px;top:217px;width:162px;">3,000×2,400</div>
<div class="t c" style="left:739px;top:240px;width:162px;">I</div>
<div class="t c" style="left:739px;top:263px;width:162px;">0,000</div>
<div class="t c" style="left:739px;top:285px;width:162px;">2,400</div>
<div class="e" style="left:586px;top:126px;">P - 003</div>
<div class="e" style="left:586px;top:149px;">Puerta - 003</div>
<div class="e" style="left:586px;top:262px;">0,00</div>
<div class="e" style="left:586px;top:285px;">2,40</div>
</body></html>
